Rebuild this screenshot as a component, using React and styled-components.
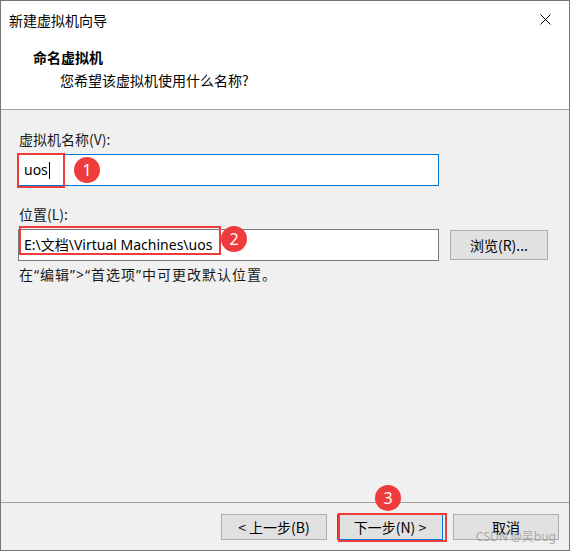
import React from "react";
import styled, { createGlobalStyle } from "styled-components";

const Global = createGlobalStyle`
    html, body {
        margin: 0;
        padding: 0;
        background: #ffffff;
    }
    body {
        font-family: "Segoe UI", "Noto Sans", "Noto Sans CJK SC", sans-serif;
        font-size: 14px;
        color: #000;
    }
`

const Window = styled.div`
    position: relative;
    width: 570px;
    height: 551px;
    box-sizing: border-box;
    border: 1px solid #767676;
    display: flex;
    flex-direction: column;
    background: #f0f0f0;
    overflow: hidden;
`

const TitleBar = styled.div`
    height: 37px;
    flex: none;
    display: flex;
    align-items: center;
    justify-content: space-between;
    padding: 0 18px 0 8px;
    background: #fff;
    font-family: "Noto Sans CJK SC", sans-serif;
    font-size: 14px;
    line-height: 20px;
`

const Close = styled.svg`
    width: 11px;
    height: 11px;
`

const Header = styled.div`
    height: 72px;
    flex: none;
    box-sizing: border-box;
    background: #fff;
    border-bottom: 1px solid #a0a0a0;
    padding: 9px 0 0 32px;
    font-family: "Noto Sans CJK SC", sans-serif;
    line-height: 20px;
`

const HeadTitle = styled.div`
    font-weight: bold;
    font-size: 14px;
`

const HeadSub = styled.div`
    font-size: 14px;
    margin: 3px 0 0 27px;
`

const Body = styled.div`
    flex: 1;
    padding: 19px 0 0 17px;
    display: flex;
    flex-direction: column;
`

const Label = styled.div`
    font-family: "Noto Sans CJK SC", sans-serif;
    font-size: 14px;
    line-height: 20px;
    margin: ${(p) => p.$top || 0}px 0 5px 1px;
    color: #1a1a1a;
`

const Row = styled.div`
    display: flex;
    align-items: center;
    gap: 11px;
`

const Field = styled.div`
    position: relative;
    width: 421px;
    height: 32px;
    box-sizing: border-box;
    border: 1px solid ${(p) => (p.$focus ? "#0078d7" : "#7a7a7a")};
    background: #fff;
    display: flex;
    align-items: center;
    padding-left: 5px;
    font-family: "Segoe UI", "Noto Sans", "Noto Sans CJK SC", sans-serif;
    font-size: 14px;
    line-height: 20px;
`

const Caret = styled.span`
    display: inline-block;
    width: 1px;
    height: 17px;
    background: #000;
    margin-left: 1px;
`

const Mark = styled.div`
    position: absolute;
    left: ${(p) => p.$l}px;
    top: ${(p) => p.$t}px;
    width: ${(p) => p.$w}px;
    height: ${(p) => p.$h}px;
    box-sizing: border-box;
    border: 2.5px solid #ee3b3b;
    pointer-events: none;
`

const Badge = styled.div`
    position: absolute;
    left: ${(p) => p.$l}px;
    top: ${(p) => p.$t}px;
    width: 26px;
    height: 26px;
    border-radius: 50%;
    background: #ee3b3b;
    color: #fff;
    font-family: "Noto Sans", sans-serif;
    font-size: 16px;
    line-height: 26px;
    text-align: center;
`

const Button = styled.div`
    position: relative;
    width: ${(p) => p.$w || 106}px;
    height: ${(p) => p.$h || 26}px;
    box-sizing: border-box;
    border: 1px solid ${(p) => (p.$def ? "#0078d7" : "#adadad")};
    background: #e1e1e1;
    display: flex;
    align-items: center;
    justify-content: center;
    font-family: "Noto Sans CJK SC", sans-serif;
    font-size: 14px;
    line-height: 20px;
`

const Hint = styled.div`
    font-family: "Noto Sans", "Noto Sans CJK SC", sans-serif;
    font-size: 14px;
    line-height: 20px;
    letter-spacing: 1px;
    margin: 4px 0 0 1px;
    color: #1a1a1a;
`

const Footer = styled.div`
    position: relative;
    height: 48px;
    flex: none;
    box-sizing: border-box;
    border-top: 1px solid #a0a0a0;
    display: flex;
    justify-content: flex-end;
    align-items: flex-start;
    gap: 10px;
    padding: 11px 10px 0 0;
`

const Watermark = styled.div`
    position: absolute;
    right: 13px;
    bottom: 5px;
    font-family: "Noto Sans", "Noto Sans CJK SC", sans-serif;
    font-size: 12px;
    color: rgba(150, 150, 150, 0.75);
`

export default function App() {
    return (
        <>
            <Global />
            <Window>
                <TitleBar>
                    <span>新建虚拟机向导</span>
                    <Close viewBox="0 0 11 11">
                        <path d="M0.5 0.5 L10.5 10.5 M10.5 0.5 L0.5 10.5" stroke="#000" strokeWidth="1" fill="none" />
                    </Close>
                </TitleBar>
                <Header>
                    <HeadTitle>命名虚拟机</HeadTitle>
                    <HeadSub>您希望该虚拟机使用什么名称?</HeadSub>
                </Header>
                <Body>
                    <Label>虚拟机名称(V):</Label>
                    <Field $focus>
                        uos<Caret />
                        <Mark $l={-2} $t={-2} $w={48} $h={35} />
                        <Badge $l={55} $t={2}>1</Badge>
                    </Field>
                    <Label $top={18}>位置(L):</Label>
                    <Row>
                        <Field>
                            E:\文档\Virtual Machines\uos
                            <Mark $l={0} $t={-4} $w={202} $h={29} />
                            <Badge $l={202} $t={-4}>2</Badge>
                        </Field>
                        <Button $w={98} $h={30}>浏览(R)...</Button>
                    </Row>
                    <Hint>在“编辑”&gt;“首选项”中可更改默认位置。</Hint>
                </Body>
                <Footer>
                    <Button>&lt; 上一步(B)</Button>
                    <Button $def>
                        下一步(N) &gt;
                        <Mark $l={0} $t={-2} $w={109} $h={29} />
                        <Badge $l={37} $t={-30}>3</Badge>
                    </Button>
                    <Button>取消</Button>
                    <Watermark>CSDN @吴bug</Watermark>
                </Footer>
            </Window>
        </>
    );
}
